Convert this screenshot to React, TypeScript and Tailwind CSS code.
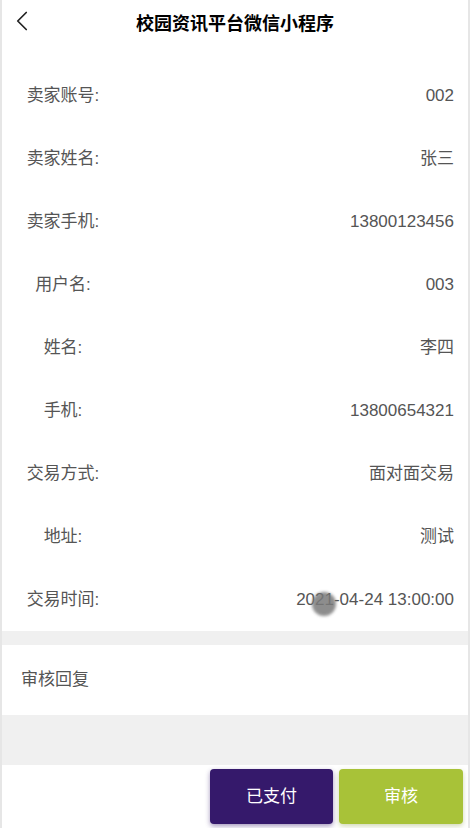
import { ChevronLeft } from "lucide-react";

const rows: { label: string; value: string }[] = [
  { label: "卖家账号:", value: "002" },
  { label: "卖家姓名:", value: "张三" },
  { label: "卖家手机:", value: "13800123456" },
  { label: "用户名:", value: "003" },
  { label: "姓名:", value: "李四" },
  { label: "手机:", value: "13800654321" },
  { label: "交易方式:", value: "面对面交易" },
  { label: "地址:", value: "测试" },
  { label: "交易时间:", value: "2021-04-24 13:00:00" },
];

export default function App() {
  return (
    <div
      className="relative flex min-h-[828px] w-full flex-col border-x-2 border-[#e6e6e6] bg-white"
      style={{ fontFamily: '"Liberation Sans", "Noto Sans CJK SC", sans-serif' }}
    >
      <header className="relative flex h-[48px] items-center justify-center">
        <button className="absolute left-[3px] top-[4px] text-[#222]" type="button" aria-label="back">
          <ChevronLeft className="h-[34px] w-[34px]" strokeWidth={1.2} />
        </button>
        <h1 className="text-[18px] font-bold text-black">校园资讯平台微信小程序</h1>
      </header>

      <div className="pt-[16px]">
        {rows.map((row) => (
          <div key={row.label} className="flex h-[63px] items-center pr-[14px] text-[17px] text-[#555]">
            <span className="w-[122px] text-center">{row.label}</span>
            <span className="ml-auto">{row.value}</span>
          </div>
        ))}
      </div>

      <div className="h-[14px] bg-[#f0f0f0]" />

      <div className="flex h-[70px] items-center px-[19px] text-[17px] text-[#555]">审核回复</div>

      <div className="h-[50px] bg-[#f0f0f0]" />

      <div className="flex justify-end gap-[6px] pr-[5px] pt-[4px]">
        <button
          className="h-[55px] w-[123px] rounded-[4px] bg-[#35196b] text-[17px] text-white shadow-[0_2px_5px_rgba(53,25,107,0.45)]"
          type="button"
        >
          已支付
        </button>
        <button
          className="h-[55px] w-[124px] rounded-[4px] bg-[#a8c238] text-[17px] text-white shadow-[0_2px_5px_rgba(120,140,40,0.35)]"
          type="button"
        >
          审核
        </button>
      </div>

      <div className="pointer-events-none absolute left-[310px] top-[592px] h-[24px] w-[24px] rounded-full bg-[#7a7a7a] opacity-85 blur-[1.5px]" />
    </div>
  );
}
